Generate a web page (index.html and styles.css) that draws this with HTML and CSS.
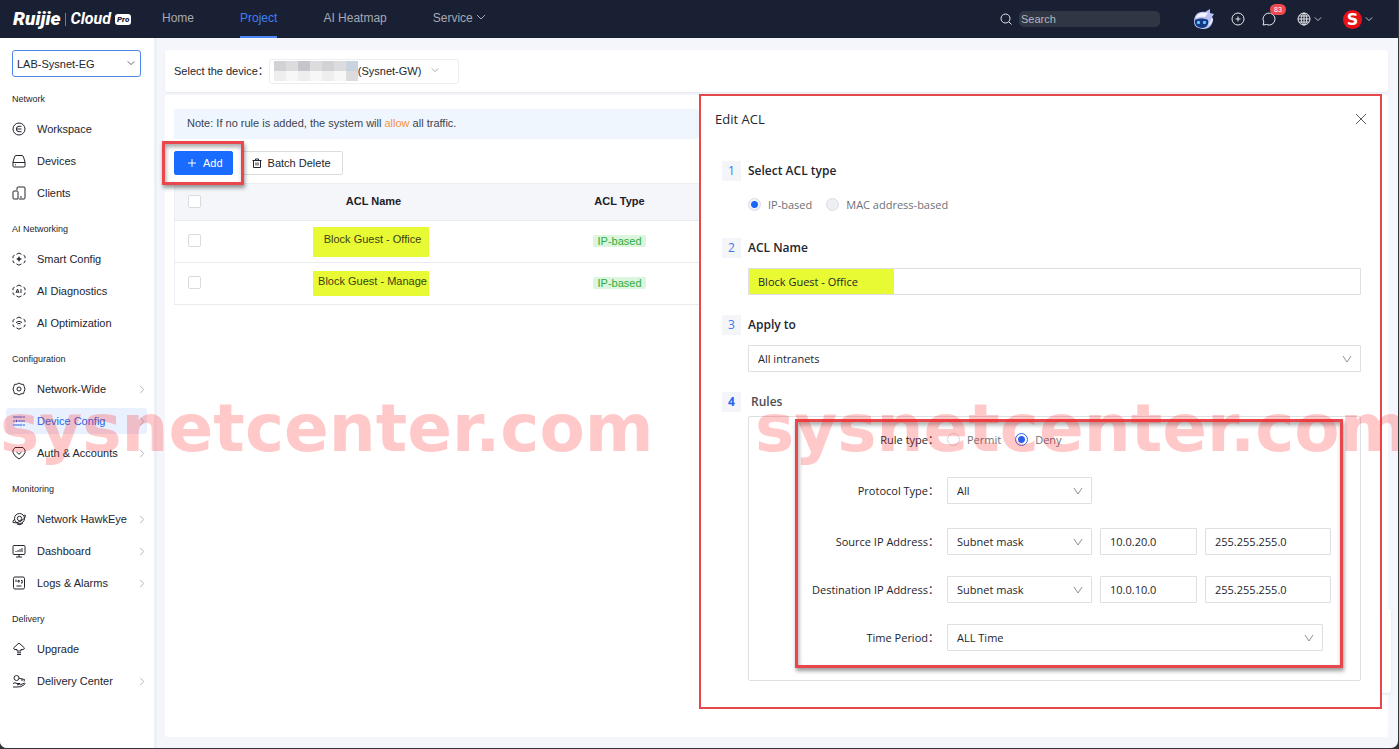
FILE: index.html
```
<!DOCTYPE html>
<html lang="en">
<head>
    <meta charset="UTF-8">
    <meta name="viewport" content="width=device-width, initial-scale=1.0">
    <title>Ruijie Cloud Pro - ACL</title>
    <link rel="icon" href="data:,">
    <link rel="stylesheet" href="styles.css">
</head>
<body>
    <!-- shared icons -->
    <svg class="defs" aria-hidden="true">
        <symbol id="down" viewBox="0 0 10 10"><path d="M1 3l4 4 4-4"/></symbol>
        <symbol id="down-tall" viewBox="0 0 10 10"><path d="M1 2l4 6 4-6"/></symbol>
        <symbol id="right" viewBox="0 0 6 10"><path d="M1 1l4 4-4 4"/></symbol>
        <symbol id="hexagon" viewBox="0 0 14 14"><path d="M4.500 2.300L7 1l2.500 1.300M11.500 3.300L13 4.200v2M13 8.500v1.500l-1.500.9M9.500 11.900L7 13.200l-2.500-1.300M2.500 10.900L1 10V8.500M1 6.200v-2l1.500-.9"/></symbol>
    </svg>

    <header class="topbar">
        <a class="logo" href="#">
            <span class="logo-brand">Ruijie</span>
            <span class="logo-line"></span>
            <span class="logo-cloud">Cloud</span>
            <span class="logo-pro">Pro</span>
        </a>
        <nav class="topnav">
            <a href="#">Home</a>
            <a href="#" class="current">Project</a>
            <a href="#">AI Heatmap</a>
            <a href="#">Service <svg class="icon-down"><use href="#down"/></svg></a>
        </nav>
        <div class="tools">
            <div class="search">
                <svg class="tool-icon" viewBox="0 0 14 14"><circle cx="6.500" cy="6.500" r="4.500"/><path d="M10 10l2.500 2.500"/></svg>
                <input type="text" placeholder="Search" aria-label="Search">
            </div>
            <svg class="mascot" viewBox="0 0 21 21">
                <path d="M1 13C1 6 5 2 12 3L17 0v4l4 1-2 3 1 2c0 6-4 10-9 10S1 18 1 13z" fill="#b9c1f2"/>
                <path d="M3 8Q6 3 12 4l3 0-3 4q-4-1-9 1zM15 17l4-8 1 1c-1 4-3 6-6 7z" fill="#f3f2ff"/>
                <path d="M2 11c4-2 9-2 13 0 1 4-1 8-6 8s-8-4-7-8z" fill="#143a86"/>
                <rect x="4" y="12" width="3" height="3" rx="1" fill="#64c8ff"/>
                <rect x="10" y="12" width="3" height="3" rx="1" fill="#64c8ff"/>
            </svg>
            <button class="tool-btn" aria-label="Create"><svg class="tool-icon" viewBox="0 0 14 14"><circle cx="7" cy="7" r="6"/><path d="M7 4.500v5M4.500 7h5"/></svg></button>
            <button class="tool-btn" aria-label="Messages">
                <svg class="tool-icon" viewBox="0 0 14 14"><path d="M1 13l.8-3A6 6 0 1 1 4.500 12.500z"/></svg>
                <span class="badge">83</span>
            </button>
            <button class="tool-btn tool-menu" aria-label="Language">
                <svg class="tool-icon" viewBox="0 0 14 14"><circle cx="7" cy="7" r="6"/><ellipse cx="7" cy="7" rx="2.800" ry="6"/><path d="M7 1v12M1 7h12M2 4h10M2 10h10"/></svg>
                <svg class="icon-down small"><use href="#down"/></svg>
            </button>
            <button class="tool-btn tool-menu" aria-label="Account">
                <span class="account">S</span>
                <svg class="icon-down small"><use href="#down"/></svg>
            </button>
        </div>
    </header>

    <div class="layout">
        <aside class="sidebar">
            <div class="select project-select">
                <select aria-label="Project"><option>LAB-Sysnet-EG</option></select>
                <svg class="icon-down small"><use href="#down"/></svg>
            </div>

            <h2>Network</h2>
            <a href="#"><svg class="menu-icon" viewBox="0 0 14 14"><circle cx="7" cy="7" r="6"/><path d="M9.500 4.300H7a2.700 2.700 0 0 0 0 5.400h2.500M5 7h4.500"/></svg>Workspace</a>
            <a href="#"><svg class="menu-icon" viewBox="0 0 14 14"><path d="M1 8l1.500-5Q3 1.500 4 1.500h6q1 0 1.500 1.500L13 8v4q0 1-1 1H2q-1 0-1-1zM1 8.500h12M3 10.800h1"/></svg>Devices</a>
            <a href="#"><svg class="menu-icon" viewBox="0 0 14 14"><path d="M5 4V2q0-1 1-1h6q1 0 1 1v10q0 1-1 1H7M1 6q0-1 1-1h3q1 0 1 1v7H2q-1 0-1-1zM8 11h2"/></svg>Clients</a>

            <h2>AI Networking</h2>
            <a href="#"><svg class="menu-icon" viewBox="0 0 14 14"><use href="#hexagon"/><path class="solid" d="M7 4l1 2 2 1-2 1-1 2-1-2-2-1 2-1z"/></svg>Smart Config</a>
            <a href="#"><svg class="menu-icon" viewBox="0 0 14 14"><use href="#hexagon"/><path d="M4 9l1.500-4L7 9M4.700 8h1.600M9 5v4"/></svg>AI Diagnostics</a>
            <a href="#"><svg class="menu-icon" viewBox="0 0 14 14"><use href="#hexagon"/><path d="M4 6.500q3-2.500 6 0M5.300 8q1.700-1.300 3.400 0M7 9.300v.4"/></svg>AI Optimization</a>

            <h2>Configuration</h2>
            <a href="#"><svg class="menu-icon" viewBox="0 0 14 14"><path d="M5 2.200L7 1l2 1.200 2.500.2.700 2.300L13 7l-.8 2.300-.7 2.300-2.500.2L7 13l-2-1.200-2.500-.2-.7-2.300L1 7l.8-2.300.7-2.300z"/><circle cx="7" cy="7" r="2"/></svg>Network-Wide<svg class="more"><use href="#right"/></svg></a>
            <a href="#" class="active"><svg class="menu-icon" viewBox="0 0 14 14"><path d="M1 3h7M10.500 3H13M1 7h2.500M5.500 7H13M1 11h7M10.500 11H13M9 1.800v2.400M4.500 5.800v2.400M9 9.800v2.400"/></svg>Device Config<svg class="more"><use href="#right"/></svg></a>
            <a href="#"><svg class="menu-icon" viewBox="0 0 14 14"><path d="M3 1.500h8L13 4v2.500Q12 10 7 13 2 10 1 6.500V4zM4.500 6L7 8.300 9.500 6"/></svg>Auth &amp; Accounts<svg class="more"><use href="#right"/></svg></a>

            <h2>Monitoring</h2>
            <a href="#"><svg class="menu-icon" viewBox="0 0 14 14"><circle cx="7.500" cy="6.500" r="5"/><circle cx="7.500" cy="6.500" r="2.200"/><path d="M3 7Q0 9 1 10.500 4 12 9 9t4.500-5.500L12 3M5 12q3 2 6-1"/></svg>Network HawkEye<svg class="more"><use href="#right"/></svg></a>
            <a href="#"><svg class="menu-icon" viewBox="0 0 14 14"><rect x="1" y="1.500" width="12" height="9" rx="1"/><path d="M4 8V7M6 8V6M8 8V5M10 8V4M7 10.500V13M4 13h6"/></svg>Dashboard<svg class="more"><use href="#right"/></svg></a>
            <a href="#"><svg class="menu-icon" viewBox="0 0 14 14"><rect x="1.500" y="1" width="11" height="12" rx="1.500"/><path d="M4 3.500V6M6 4.500h1.200V6H6zM9 4.500h1.200V7H9M4.500 10h5"/></svg>Logs &amp; Alarms<svg class="more"><use href="#right"/></svg></a>

            <h2>Delivery</h2>
            <a href="#"><svg class="menu-icon" viewBox="0 0 14 14"><path d="M7 1l5.500 5-1 1.500H9V9H5V7.500H2.500l-1-1.500zM5 10.800h4M5 12.500h4"/></svg>Upgrade</a>
            <a href="#"><svg class="menu-icon" viewBox="0 0 14 14"><circle cx="4.500" cy="4" r="2.500"/><path d="M7 4.200l5.500 1.300M12.500 5.500L12 7.500M10 5v2M1 9.500q2-1.500 4 0h3q0 1.500-3 1.300M8 11l4.500-2q1 .5 0 1.500Q9 13.500 5 13H1"/></svg>Delivery Center<svg class="more"><use href="#right"/></svg></a>
        </aside>

        <main>
            <section class="card device-bar">
                <label for="device">Select the device：</label>
                <div class="select device-select">
                    <select id="device"><option>(Sysnet-GW)</option></select>
                    <div class="mosaic">
                        <i class="m3"></i><i class="m2"></i><i class="m4"></i><i class="m2"></i><i class="m3"></i><i class="m2"></i><i class="m5"></i>
                        <i class="m1"></i><i class="m0"></i><i class="m1"></i><i class="m0"></i><i class="m1"></i><i class="m0"></i><i class="m2"></i>
                    </div>
                    <svg class="icon-down small"><use href="#down"/></svg>
                </div>
            </section>

            <section class="card acl">
                <p class="note">Note: If no rule is added, the system will <em>allow</em> all traffic.</p>
                <div class="actions">
                    <span class="callout"><button class="btn primary"><svg class="btn-icon" viewBox="0 0 10 10"><path d="M5 1v8M1 5h8"/></svg>Add</button></span>
                    <button class="btn"><svg class="btn-icon" viewBox="0 0 10 10"><path d="M.5 2.500h9M3.500 2.500V1h3v1.500M1.500 2.500v7h7v-7M4 4.500v3M6 4.500v3"/></svg>Batch Delete</button>
                </div>
                <table>
                    <thead>
                        <tr><th class="check"><input type="checkbox" aria-label="Select all"></th><th class="col">ACL Name</th><th class="col">ACL Type</th><th></th></tr>
                    </thead>
                    <tbody>
                        <tr><td class="check"><input type="checkbox" aria-label="Select Block Guest - Office"></td><td><mark>Block Guest - Office</mark></td><td><span class="tag">IP-based</span></td><td></td></tr>
                        <tr><td class="check"><input type="checkbox" aria-label="Select Block Guest - Manage"></td><td><mark class="short">Block Guest - Manage</mark></td><td><span class="tag">IP-based</span></td><td></td></tr>
                    </tbody>
                </table>
            </section>
        </main>
    </div>

    <div class="side-tab"></div>

    <form class="drawer">
        <div class="drawer-head">
            <h1>Edit ACL</h1>
            <button type="button" class="close" aria-label="Close"><svg viewBox="0 0 12 12"><path d="M1 1l10 10M11 1L1 11"/></svg></button>
        </div>

        <div class="step">
            <h3><span>1</span>Select ACL type</h3>
            <div class="radios disabled">
                <label><input type="radio" name="acl-type" checked>IP-based</label>
                <label><input type="radio" name="acl-type">MAC address-based</label>
            </div>
        </div>
        <div class="step">
            <h3><span>2</span><label for="acl-name">ACL Name</label></h3>
            <input class="field marked" type="text" id="acl-name" value="Block Guest - Office">
        </div>
        <div class="step">
            <h3><span>3</span><label for="apply-to">Apply to</label></h3>
            <div class="select">
                <select class="field" id="apply-to"><option>All intranets</option></select>
                <svg class="icon-down"><use href="#down-tall"/></svg>
            </div>
        </div>
        <div class="step rules">
            <h3><span>4</span>Rules</h3>
            <div class="rules-box">
                <div class="rules-form">
                    <div class="row wide">
                        <span class="row-label">Rule type：</span>
                        <div class="radios">
                            <label><input type="radio" name="rule-type">Permit</label>
                            <label><input type="radio" name="rule-type" checked>Deny</label>
                        </div>
                    </div>
                    <div class="row wide">
                        <label class="row-label" for="protocol">Protocol Type：</label>
                        <div class="select kind"><select class="field" id="protocol"><option>All</option></select><svg class="icon-down"><use href="#down-tall"/></svg></div>
                    </div>
                    <div class="row">
                        <label class="row-label" for="source">Source IP Address：</label>
                        <div class="select kind"><select class="field" id="source"><option>Subnet mask</option></select><svg class="icon-down"><use href="#down-tall"/></svg></div>
                        <input class="field ip" type="text" value="10.0.20.0" aria-label="Source address">
                        <input class="field mask" type="text" value="255.255.255.0" aria-label="Source mask">
                    </div>
                    <div class="row">
                        <label class="row-label" for="destination">Destination IP Address：</label>
                        <div class="select kind"><select class="field" id="destination"><option>Subnet mask</option></select><svg class="icon-down"><use href="#down-tall"/></svg></div>
                        <input class="field ip" type="text" value="10.0.10.0" aria-label="Destination address">
                        <input class="field mask" type="text" value="255.255.255.0" aria-label="Destination mask">
                    </div>
                    <div class="row">
                        <label class="row-label" for="period">Time Period：</label>
                        <div class="select period"><select class="field" id="period"><option>ALL Time</option></select><svg class="icon-down"><use href="#down-tall"/></svg></div>
                    </div>
                </div>
            </div>
        </div>
    </form>

    <div class="watermark">sysnetcenter.com</div>
    <div class="watermark second">sysnetcenter.com</div>
</body>
</html>
```
FILE: styles.css
```
* {
    box-sizing: border-box;
}
html {
    background: #33343a;
}
body {
    position: relative;
    display: flex;
    flex-direction: column;
    min-height: calc(100vh - 1px);
    margin: 0 1px 1px 0;
    overflow: hidden;
    border-radius: 0 0 7px 7px;
    background: #f4f6fb;
    color: #23262e;
    font: 11px/14px "Liberation Sans", "Noto Sans CJK SC", sans-serif;
}
h1, h2, h3, p {
    margin: 0;
}
a {
    color: inherit;
    text-decoration: none;
}
button, input, select {
    margin: 0;
    font: inherit;
    color: inherit;
}
svg {
    flex: none;
    fill: none;
    stroke: currentColor;
}
.defs {
    position: absolute;
    width: 0;
    height: 0;
}
.icon-down {
    width: 10px;
    height: 10px;
}
.icon-down.small {
    width: 8px;
    height: 8px;
}

/* top bar */
.topbar {
    display: flex;
    align-items: center;
    height: 38px;
    padding: 0 25px 0 13px;
    background: #1a2033;
    color: #a6a9b2;
}
.logo {
    display: flex;
    align-items: center;
    width: 149px;
    color: #fff;
    font-family: Roboto, sans-serif;
    font-style: italic;
}
.logo-brand {
    font-size: 19px;
    font-weight: 900;
}
.logo-line {
    width: 1px;
    height: 13px;
    margin: 0 5px 0 4px;
    background: #777b88;
}
.logo-cloud {
    font-size: 16px;
    font-weight: 700;
}
.logo-pro {
    margin-left: 4px;
    padding: 0 2px;
    border-radius: 3px;
    background: #fff;
    color: #1a2033;
    font-size: 8px;
    font-weight: 900;
    line-height: 11px;
}
.topnav {
    display: flex;
    gap: 46px;
    height: 100%;
    font-size: 12px;
    line-height: 37px;
}
.topnav a.current {
    border-bottom: 2px solid #4a86f7;
    color: #3f7ff5;
}
.tools {
    display: flex;
    align-items: center;
    gap: 17px;
    margin-left: auto;
    color: #e6e7ea;
}
.search {
    display: flex;
    align-items: center;
    gap: 6px;
    margin-right: 16px;
}
.search input {
    width: 141px;
    height: 16px;
    padding: 0 2px;
    border: 0;
    border-radius: 5px;
    background: #303644;
}
.search input::placeholder {
    color: #b4b7be;
    opacity: 1;
}
.mascot {
    width: 21px;
    height: 21px;
    stroke: none;
}
.tool-icon {
    width: 14px;
    height: 14px;
}
.tool-btn {
    position: relative;
    display: flex;
    align-items: center;
    padding: 0;
    border: 0;
    background: none;
}
.tool-menu {
    gap: 3px;
    margin-left: 4px;
}
.badge {
    position: absolute;
    top: -8px;
    left: 8px;
    padding: 0 4px;
    border-radius: 6px;
    background: #f04a4f;
    color: #fff;
    font-size: 7px;
    line-height: 11px;
}
.account {
    width: 19px;
    border-radius: 50%;
    background: #e8111a;
    color: #fff;
    font: bold 16px/19px "DejaVu Sans", sans-serif;
}

/* sidebar */
.layout {
    display: flex;
    flex: 1;
}
.sidebar {
    display: flex;
    flex: none;
    flex-direction: column;
    width: 157px;
    padding: 12px 7px 20px 6px;
    border-right: 3px solid #edf0f6;
    background: #fff;
}
.sidebar h2 {
    margin: 3px 0 3px 6px;
    font-size: 9px;
    font-weight: 400;
    line-height: 28px;
}
.sidebar a {
    display: flex;
    align-items: center;
    height: 26px;
    margin-bottom: 6px;
    padding: 0 2px 0 6px;
    border-radius: 3px;
}
.sidebar a.active {
    background: #e9f0fe;
    color: #2563eb;
}
.menu-icon {
    width: 14px;
    height: 14px;
    margin-right: 11px;
}
.solid {
    fill: currentColor;
    stroke: none;
}
.more {
    width: 6px;
    height: 9px;
    margin-left: auto;
    color: #a9adb5;
}
.select {
    position: relative;
}
.select select {
    width: 100%;
    appearance: none;
    background: #fff;
}
.select > svg {
    position: absolute;
    top: 50%;
    right: 9px;
    margin-top: -5px;
    color: #8d9199;
    pointer-events: none;
}
.project-select {
    margin: 0 0 5px 6px;
    width: 129px;
}
.project-select select {
    display: block;
    height: 27px;
    padding: 0 4px;
    border: 1px solid #4f86e8;
    border-radius: 3px;
}
.project-select > svg {
    right: 6px;
    color: #3a3d45;
}

/* main area */
main {
    display: flex;
    flex: 1;
    flex-direction: column;
    gap: 3px;
    min-width: 0;
    padding: 12px 10px 11px 8px;
}
.card {
    background: #fff;
    border-radius: 3px;
}
.device-bar {
    display: flex;
    align-items: center;
    height: 42px;
    padding-left: 9px;
    box-shadow: 0 1px 2px #e6e8ec;
}
.device-select {
    width: 190px;
}
.device-select select {
    height: 25px;
    padding: 0 0 0 88px;
    border: 1px solid #eceef1;
    border-radius: 3px;
}
.device-select > svg {
    right: 20px;
}
.mosaic {
    position: absolute;
    top: 2px;
    left: 5px;
    display: grid;
    grid-template-columns: repeat(7, 12px);
    grid-auto-rows: 10px;
}
.m0 { background: #f7f7f8; }
.m1 { background: #eeeeef; }
.m2 { background: #dcdcdf; }
.m3 { background: #d2d2d4; }
.m4 { background: #c5c5cb; }
.m5 { background: #c9d3df; }
.acl {
    flex: 1;
    padding: 14px 9px;
}
.note {
    padding: 7px 13px 9px;
    background: #f0f6fe;
    color: #3d434e;
}
.note em {
    color: #f5943c;
    font-style: normal;
}
.actions {
    display: flex;
    gap: 9px;
    padding: 12px 0 8px;
}
.btn {
    display: flex;
    align-items: center;
    gap: 6px;
    height: 24px;
    padding: 0 11px 1px 9px;
    border: 1px solid #d9dce1;
    border-radius: 2px;
    background: #fff;
}
.btn.primary {
    padding: 0 9px 1px 12px;
    border-color: #1a6bff;
    background: #1a6bff;
    color: #fff;
}
.btn-icon {
    width: 10px;
    height: 10px;
}
.callout {
    position: relative;
}
.callout::after {
    content: "";
    position: absolute;
    inset: -10px -11px -10px -12px;
    border: 3px solid #e9474b;
    box-shadow: 1px 3px 4px #0006, inset 1px 3px 4px #0005;
    pointer-events: none;
}
table {
    width: 100%;
    table-layout: fixed;
    border-collapse: collapse;
    border: 1px solid #eceef2;
    text-align: center;
}
th, td {
    padding: 0 0 2px;
    border-bottom: 1px solid #e9ebef;
}
th {
    height: 37px;
    background: #f5f6fa;
    color: #1d2027;
}
td {
    height: 42px;
}
.check {
    width: 76px;
    padding-left: 13px;
    text-align: left;
}
.col {
    width: 246px;
}
.check input {
    display: block;
    width: 13px;
    height: 13px;
    appearance: none;
    border: 1px solid #d8dbe0;
    border-radius: 2px;
    background: #fff;
}
mark {
    display: inline-block;
    width: 116px;
    margin: 2px 6px 0 0;
    padding: 5px 0 11px 4px;
    background: #e8fa34;
    color: #3a4212;
}
mark.short {
    padding: 3px 0 8px 4px;
}
.tag {
    padding: 0 4px;
    border-radius: 2px;
    background: #dcf5de;
    color: #2fae3b;
}

/* edit drawer */
.side-tab {
    position: absolute;
    top: 609px;
    right: 7px;
    width: 20px;
    height: 84px;
    border-radius: 3px;
    background: #fff;
    box-shadow: 0 1px 3px #dcdfe6;
}
.drawer {
    position: absolute;
    top: 94px;
    right: 16px;
    left: 50%;
    padding: 13px 13px 26px 14px;
    border: 2px solid #e5484b;
    background: #fff;
    font: 11px/14px "Open Sans", "Noto Sans CJK SC", sans-serif;
}
.drawer-head {
    display: flex;
    align-items: center;
    justify-content: space-between;
    height: 20px;
    margin-bottom: 32px;
}
.drawer h1 {
    font-size: 13px;
    font-weight: 400;
}
.close {
    width: 12px;
    height: 12px;
    padding: 0;
    border: 0;
    background: none;
    color: #555a66;
}
.close svg {
    display: block;
}
.step {
    margin: 0 6px 20px 33px;
}
.step h3 {
    display: flex;
    align-items: center;
    height: 20px;
    margin: 0 0 10px -26px;
    font-size: 12px;
    font-weight: 600;
}
.step h3 span {
    width: 19px;
    margin-right: 7px;
    background: #f4f5f8;
    color: #3b78f0;
    font-weight: 400;
    line-height: 20px;
    text-align: center;
}
.field {
    display: block;
    width: 100%;
    height: 27px;
    padding: 0 9px;
    border: 1px solid #dddfe3;
    border-radius: 1px;
    background: #fff;
}
.marked {
    background: linear-gradient(#e8fa34, #e8fa34) no-repeat 0 0 / 145px 100%;
}
.radios {
    display: flex;
    align-items: center;
    gap: 14px;
    height: 27px;
    color: #6e7178;
}
.radios label {
    display: flex;
    align-items: center;
    gap: 7px;
}
.radios input {
    width: 13px;
    height: 13px;
    appearance: none;
    border: 1px solid #d3d6dc;
    border-radius: 50%;
    background: #fff;
}
.radios input:checked {
    border-color: #2a6cf0;
    background: radial-gradient(#2a5fe8 0 3px, #fff 4px);
}
.disabled input {
    border-color: #dadce2;
    background: #eeeff3;
}
.disabled input:checked {
    border-color: #dadce2;
    background: radial-gradient(#1a66f5 0 3px, #eff2f9 4px);
}
.rules {
    margin-bottom: 0;
}
.rules h3 {
    margin-bottom: 4px;
    color: #4b4e55;
}
.rules h3 span {
    margin-right: 10px;
    color: #1f66f0;
    font-weight: 700;
}
.rules-box {
    padding: 2px 17px 12px 46px;
    border: 1px solid #dddfe3;
    border-radius: 2px;
}
.rules-form {
    padding: 4px 9px 14px 0;
    border: 3px solid #e9474b;
    box-shadow: 1px 3px 4px #0006, inset 1px 3px 4px #0005;
}
.row {
    display: flex;
    align-items: center;
    gap: 8px;
    height: 27px;
    margin-bottom: 21px;
}
.row.wide {
    margin-bottom: 24px;
}
.row:last-child {
    margin-bottom: 0;
}
.row-label {
    flex: none;
    width: 141px;
    text-align: right;
}
.kind {
    flex: none;
    width: 145px;
}
.ip {
    flex: none;
    width: 97px;
}
.mask {
    flex: 1;
    min-width: 0;
}
.period {
    flex: 1;
    margin-right: 8px;
}

/* watermark */
.watermark {
    position: absolute;
    top: 391px;
    left: 0;
    color: #ff1e1e3d;
    font: bold 66px/76px "DejaVu Sans", sans-serif;
    pointer-events: none;
}
.watermark.second {
    left: 54%;
}
```
